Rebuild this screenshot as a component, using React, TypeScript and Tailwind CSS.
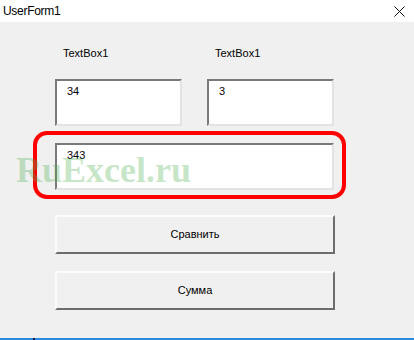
const FONT = { fontFamily: '"Liberation Sans", Arial, sans-serif' }

function TextBox({ value, className }: { value: string; className: string }) {
  return (
    <div
      className={`bg-white border-2 border-t-[#7a7a7a] border-l-[#7a7a7a] border-b-[#e3e3e3] border-r-[#e3e3e3] pl-[10px] pt-[4px] text-[11px] leading-[13px] text-black ${className}`}
    >
      {value}
    </div>
  )
}

function Button({ label, className }: { label: string; className: string }) {
  return (
    <div
      className={`w-[280px] h-[39px] flex items-center justify-center bg-[#f0f0f0] border-2 border-t-[#fbfbfb] border-l-[#fbfbfb] border-b-[#6d6d6d] border-r-[#6d6d6d] text-[11px] text-black ${className}`}
    >
      {label}
    </div>
  )
}

export default function App() {
  return (
    <div className="relative w-[414px] h-[340px] overflow-hidden bg-[#f0f0f0] flex flex-col" style={FONT}>
      {/* Title bar */}
      <div className="h-[22px] shrink-0 bg-white flex items-center justify-between pl-[3px] pr-[9px]">
        <span className="text-[12px] tracking-[-0.3px] text-black">UserForm1</span>
        <svg width="11" height="11" viewBox="0 0 11 11" className="mt-[1px]">
          <path d="M0.5 0.5L10.5 10.5M10.5 0.5L0.5 10.5" stroke="#111" strokeWidth="1" />
        </svg>
      </div>

      {/* Labels */}
      <div className="mt-[25px] flex pl-[63px] text-[11px] leading-[13px] text-black">
        <span className="w-[152px]">TextBox1</span>
        <span>TextBox1</span>
      </div>

      {/* Input row */}
      <div className="mt-[19px] flex pl-[55px] gap-[25px]">
        <TextBox value="34" className="w-[127px] h-[47px]" />
        <TextBox value="3" className="w-[127px] h-[47px]" />
      </div>

      {/* Highlighted result box */}
      <div className="mt-[5px] ml-[33px] w-[313px] h-[68px] border-4 border-[#ff0000] rounded-[14px] pt-[8px] pl-[18px]">
        <TextBox value="343" className="w-[279px] h-[47px]" />
      </div>

      <Button label="Сравнить" className="mt-[16px] ml-[55px]" />
      <Button label="Сумма" className="mt-[17px] ml-[55px]" />

      <div className="flex-1" />
      <div className="h-[2px] shrink-0 bg-[#2b8ade] flex">
        <span className="ml-[33px] w-[2px] bg-[#1a1a2e]" />
      </div>

      {/* Watermark */}
      <div
        className="absolute left-[16px] top-[150px] text-[36px] font-bold leading-[40px] text-[rgba(76,175,80,0.32)] pointer-events-none"
        style={{ fontFamily: '"Liberation Serif", "Times New Roman", serif' }}
      >
        RuExcel.ru
      </div>
    </div>
  )
}
